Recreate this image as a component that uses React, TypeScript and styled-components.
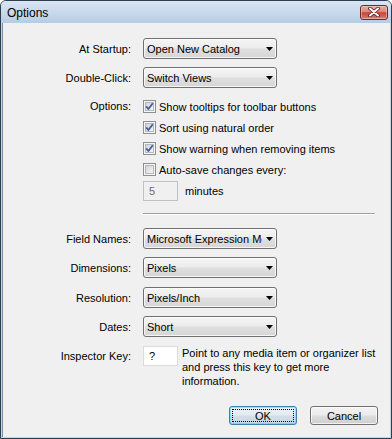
import React from 'react';
import styled, { createGlobalStyle } from 'styled-components';

const GlobalStyle = createGlobalStyle`
  html, body { margin: 0; padding: 0; background: #ffffff; }
  body { font-family: "Liberation Sans", Arial, sans-serif; font-size: 11px; color: #000; }
  * { box-sizing: border-box; }
`;

const Window = styled.div`
  width: 392px;
  height: 439px;
  border: 1px solid #2c3d50;
  border-radius: 6px 6px 0 0;
  background: #bfd5ea;
  display: flex;
  flex-direction: column;
  overflow: hidden;
`;

const TitleBar = styled.div`
  height: 22px;
  flex: none;
  display: flex;
  align-items: center;
  justify-content: space-between;
  padding: 0 3px 0 6px;
  background: linear-gradient(#d9e5f1, #c6d8eb 55%, #b6cce4);
`;

const Title = styled.span`
  font-size: 12px;
  padding-top: 2px;
  color: #000;
`;

const CloseButton = styled.div`
  width: 28px;
  height: 15px;
  border: 1px solid #6a2b22;
  border-radius: 3px;
  background: linear-gradient(#e6aca2 0%, #d98a7b 42%, #c5493a 52%, #cd6555 80%, #d98b7e 100%);
  box-shadow: inset 0 0 0 1px rgba(255, 220, 210, 0.45);
  display: flex;
  align-items: center;
  justify-content: center;
`;

const Body = styled.div`
  flex: 1;
  margin: 0 1px 1px 1px;
  border-left: 1px solid #7c90a6;
  background: #f0f0f0;
  padding-top: 15px;
  display: flex;
  flex-direction: column;
`;

const Row = styled.div<{ $mt?: number; $top?: boolean }>`
  display: grid;
  grid-template-columns: 128px 1fr;
  column-gap: 12px;
  align-items: ${p => (p.$top ? 'start' : 'center')};
  margin-top: ${p => p.$mt ?? 0}px;
`;

const Label = styled.div<{ $lh?: number }>`
  text-align: right;
  white-space: nowrap;
  line-height: ${p => (p.$lh ? `${p.$lh}px` : 'normal')};
`;

const SelectBox = styled.div`
  width: 134px;
  height: 21px;
  border: 1px solid #707070;
  border-radius: 3px;
  background: linear-gradient(#f5f5f5 0%, #ececec 48%, #dfdfdf 52%, #d6d6d6 100%);
  box-shadow: inset 0 0 0 1px rgba(255, 255, 255, 0.75);
  display: flex;
  align-items: center;
  gap: 4px;
  padding: 0 3px 0 3px;
`;

const SelectText = styled.span`
  flex: 1;
  overflow: hidden;
  white-space: nowrap;
`;

const CheckList = styled.div`
  display: flex;
  flex-direction: column;
`;

const CheckRow = styled.div`
  height: 21px;
  display: flex;
  align-items: center;
  gap: 3px;
  white-space: nowrap;
`;

const SpinRow = styled.div`
  display: flex;
  align-items: center;
  gap: 7px;
`;

const SmallInput = styled.div<{ $disabled?: boolean }>`
  width: 35px;
  height: 20px;
  border: 1px solid ${p => (p.$disabled ? '#c2c2c2' : '#dcdcdc')};
  background: ${p => (p.$disabled ? '#f0f0f0' : '#ffffff')};
  color: ${p => (p.$disabled ? '#6d6d6d' : '#000')};
  padding-left: 5px;
  display: flex;
  align-items: center;
  flex: none;
`;

const Separator = styled.div`
  width: 232px;
  height: 2px;
  border-top: 1px solid #a0a0a0;
  border-bottom: 1px solid #ffffff;
`;

const InspectorWrap = styled.div`
  display: flex;
  align-items: flex-start;
  gap: 4px;
`;

const HelpText = styled.div`
  line-height: 14px;
  width: 200px;
`;

const ButtonBar = styled.div`
  display: flex;
  justify-content: flex-end;
  gap: 13px;
  padding-right: 12px;
  margin-top: 18px;
`;

const Button = styled.div<{ $default?: boolean }>`
  position: relative;
  width: 68px;
  height: 19px;
  border: 1px solid ${p => (p.$default ? '#3c7fb1' : '#707070')};
  border-radius: 3px;
  background: ${p =>
    p.$default
      ? 'linear-gradient(#eaf3f8 0%, #e0ebf2 48%, #d1dfe8 52%, #c6d6e0 100%)'
      : 'linear-gradient(#f3f3f3 0%, #ebebeb 48%, #dddddd 52%, #cfcfcf 100%)'};
  box-shadow: inset 0 0 0 1px ${p => (p.$default ? 'rgba(72, 208, 246, 0.55)' : 'rgba(255,255,255,0.7)')};
  display: flex;
  align-items: center;
  justify-content: center;
  &::after {
    content: '';
    display: ${p => (p.$default ? 'block' : 'none')};
    position: absolute;
    inset: 2px;
    border: 1px dotted #000;
  }
`;

const Arrow = () => (
  <svg width="7" height="4" viewBox="0 0 7 4" style={{ flex: 'none' }}>
    <polygon points="0,0 7,0 3.5,4" fill="#000" />
  </svg>
);

const Select = ({ value }: { value: string }) => (
  <SelectBox>
    <SelectText>{value}</SelectText>
    <Arrow />
  </SelectBox>
);

const Checkbox = ({ checked }: { checked?: boolean }) => (
  <svg width="13" height="13" viewBox="0 0 13 13" style={{ flex: 'none' }}>
    <defs>
      <linearGradient id="cbfill" x1="0" y1="0" x2="1" y2="1">
        <stop offset="0" stopColor="#cfd1d4" />
        <stop offset="1" stopColor="#f8f8f8" />
      </linearGradient>
    </defs>
    <rect x="0.5" y="0.5" width="12" height="12" fill="#f6f6f6" stroke="#8e8f8f" />
    <rect x="2.5" y="2.5" width="8" height="8" fill="url(#cbfill)" stroke="#b4b8bd" />
    {checked && (
      <path d="M3.2 6.4 L5.4 9 L9.8 3.2" stroke="#3f5f9e" strokeWidth="1.8" fill="none" strokeLinejoin="round" />
    )}
  </svg>
);

const CloseIcon = () => (
  <svg width="12" height="10" viewBox="0 0 12 10">
    <path d="M2 1.5 L10 8.5 M10 1.5 L2 8.5" stroke="#4a1a14" strokeWidth="3.6" strokeLinecap="round" />
    <path d="M2 1.5 L10 8.5 M10 1.5 L2 8.5" stroke="#ffffff" strokeWidth="2" strokeLinecap="round" />
  </svg>
);

export default function App() {
  return (
    <>
      <GlobalStyle />
      <Window>
        <TitleBar>
          <Title>Options</Title>
          <CloseButton>
            <CloseIcon />
          </CloseButton>
        </TitleBar>
        <Body>
          <Row>
            <Label>At Startup:</Label>
            <Select value="Open New Catalog" />
          </Row>
          <Row $mt={8}>
            <Label>Double-Click:</Label>
            <Select value="Switch Views" />
          </Row>
          <Row $mt={8} $top>
            <Label $lh={21}>Options:</Label>
            <CheckList>
              <CheckRow>
                <Checkbox checked />
                Show tooltips for toolbar buttons
              </CheckRow>
              <CheckRow>
                <Checkbox checked />
                Sort using natural order
              </CheckRow>
              <CheckRow>
                <Checkbox checked />
                Show warning when removing items
              </CheckRow>
              <CheckRow>
                <Checkbox />
                Auto-save changes every:
              </CheckRow>
            </CheckList>
          </Row>
          <Row $mt={1}>
            <span />
            <SpinRow>
              <SmallInput $disabled>5</SmallInput>
              minutes
            </SpinRow>
          </Row>
          <Row $mt={12}>
            <span />
            <Separator />
          </Row>
          <Row $mt={13}>
            <Label>Field Names:</Label>
            <Select value="Microsoft Expression Media" />
          </Row>
          <Row $mt={8}>
            <Label>Dimensions:</Label>
            <Select value="Pixels" />
          </Row>
          <Row $mt={9}>
            <Label>Resolution:</Label>
            <Select value="Pixels/Inch" />
          </Row>
          <Row $mt={8}>
            <Label>Dates:</Label>
            <Select value="Short" />
          </Row>
          <Row $mt={9} $top>
            <Label $lh={20}>Inspector Key:</Label>
            <InspectorWrap>
              <SmallInput>?</SmallInput>
              <HelpText>
                Point to any media item or organizer list and press this key to get more information.
              </HelpText>
            </InspectorWrap>
          </Row>
          <ButtonBar>
            <Button $default>OK</Button>
            <Button>Cancel</Button>
          </ButtonBar>
        </Body>
      </Window>
    </>
  );
}
